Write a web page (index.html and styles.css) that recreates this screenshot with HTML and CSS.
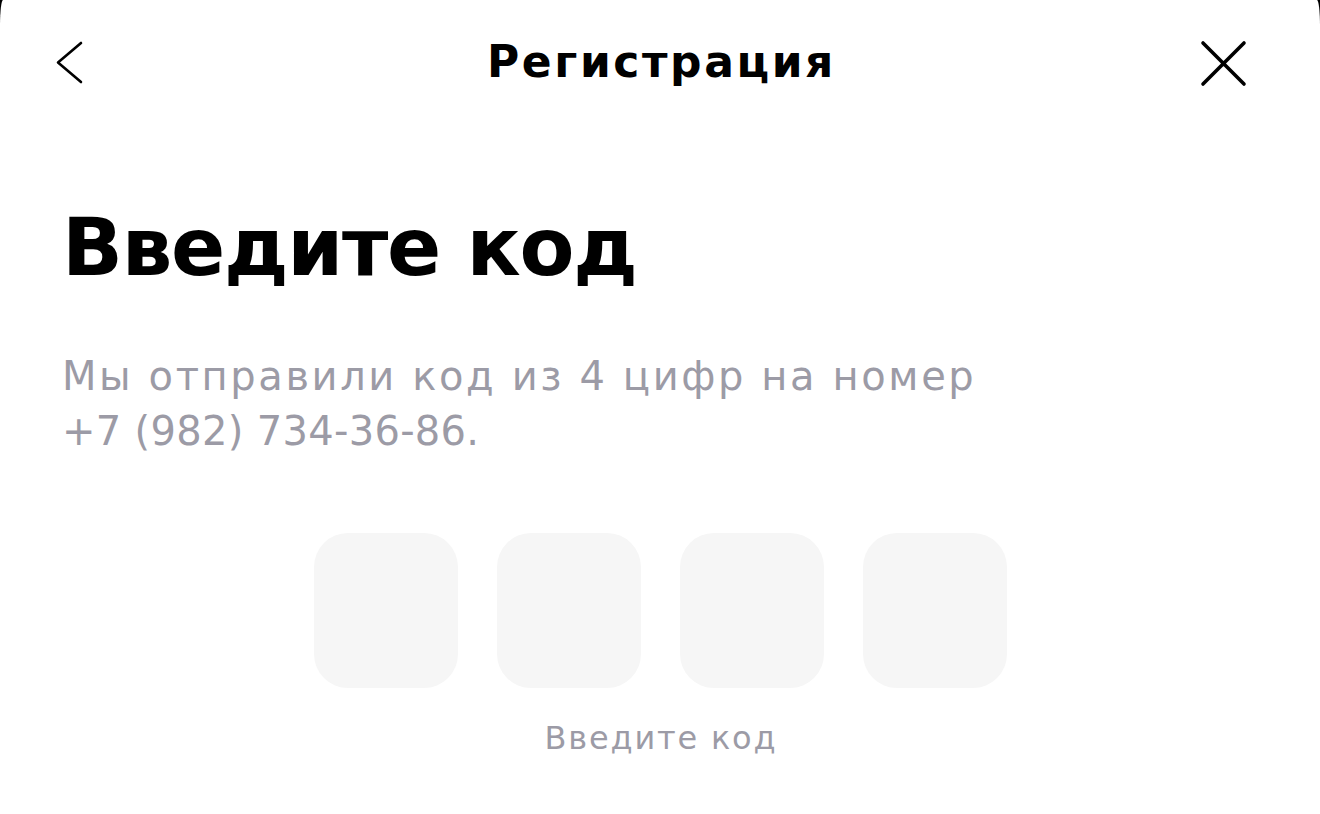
FILE: index.html
```html
<!DOCTYPE html>
<html lang="ru">
<head>
<meta charset="utf-8">
<title>Регистрация</title>
<link rel="stylesheet" href="styles.css">
</head>
<body>
<div class="sheet">
  <header class="topbar">
    <button class="icon-btn back" aria-label="Назад">
      <svg width="28" height="44" viewBox="0 0 28 44"><polyline points="25,2 2,21.5 25,41" fill="none" stroke="#000" stroke-width="2.6" stroke-linecap="round" stroke-linejoin="round"/></svg>
    </button>
    <h1 class="title">Регистрация</h1>
    <button class="icon-btn close" aria-label="Закрыть">
      <svg width="48" height="48" viewBox="0 0 48 48"><path d="M4 4 L45 45 M45 4 L4 45" fill="none" stroke="#000" stroke-width="3.6" stroke-linecap="round"/></svg>
    </button>
  </header>
  <main class="content">
    <h2 class="heading">Введите код</h2>
    <p class="lead"><span class="lead-line1">Мы отправили код из 4 цифр на номер</span><br><span class="lead-line2">+7 (982) 734-36-86.</span></p>
    <div class="code">
      <div class="cell"></div>
      <div class="cell"></div>
      <div class="cell"></div>
      <div class="cell"></div>
    </div>
    <p class="hint">Введите код</p>
  </main>
</div>
</body>
</html>
```

FILE: styles.css
```css
html, body {
  margin: 0;
  padding: 0;
}
body {
  background: #000;
  font-family: "DejaVu Sans", sans-serif;
  color: #000;
}
.sheet {
  min-height: 814px;
  background: #fff;
  border-radius: 3px 3px 0 0 / 26px 26px 0 0;
  overflow: hidden;
}
.topbar {
  height: 126px;
  display: grid;
  grid-template-columns: 1fr auto 1fr;
  align-items: center;
}
.icon-btn {
  border: 0;
  background: none;
  padding: 0;
  display: flex;
}
.back {
  justify-self: start;
  margin-left: 56px;
}
.close {
  justify-self: end;
  margin-right: 73px;
}
.title {
  margin: 0;
  padding: 0 0 2px 3px;
  font-size: 44px;
  line-height: 1;
  font-weight: 700;
  letter-spacing: 2.6px;
}
.content {
  padding: 0 62px;
}
.heading {
  margin: 82px 0 0;
  font-size: 80px;
  line-height: 1;
  font-weight: 700;
  letter-spacing: -1.3px;
}
.lead {
  margin: 61px 0 0;
  font-size: 40px;
  line-height: 55px;
  color: #9c9ba6;
}
.lead-line1 {
  letter-spacing: 2.6px;
}
.lead-line2 {
  letter-spacing: 0.3px;
}
.code {
  margin-top: 74px;
  display: flex;
  justify-content: center;
  gap: 39px;
}
.cell {
  width: 144px;
  height: 155px;
  border-radius: 34px;
  background: #f6f6f6;
}
.hint {
  margin: 34px 0 0;
  padding-left: 2px;
  text-align: center;
  font-size: 32px;
  line-height: 1;
  letter-spacing: 1.8px;
  color: #9c9ba6;
}
```
